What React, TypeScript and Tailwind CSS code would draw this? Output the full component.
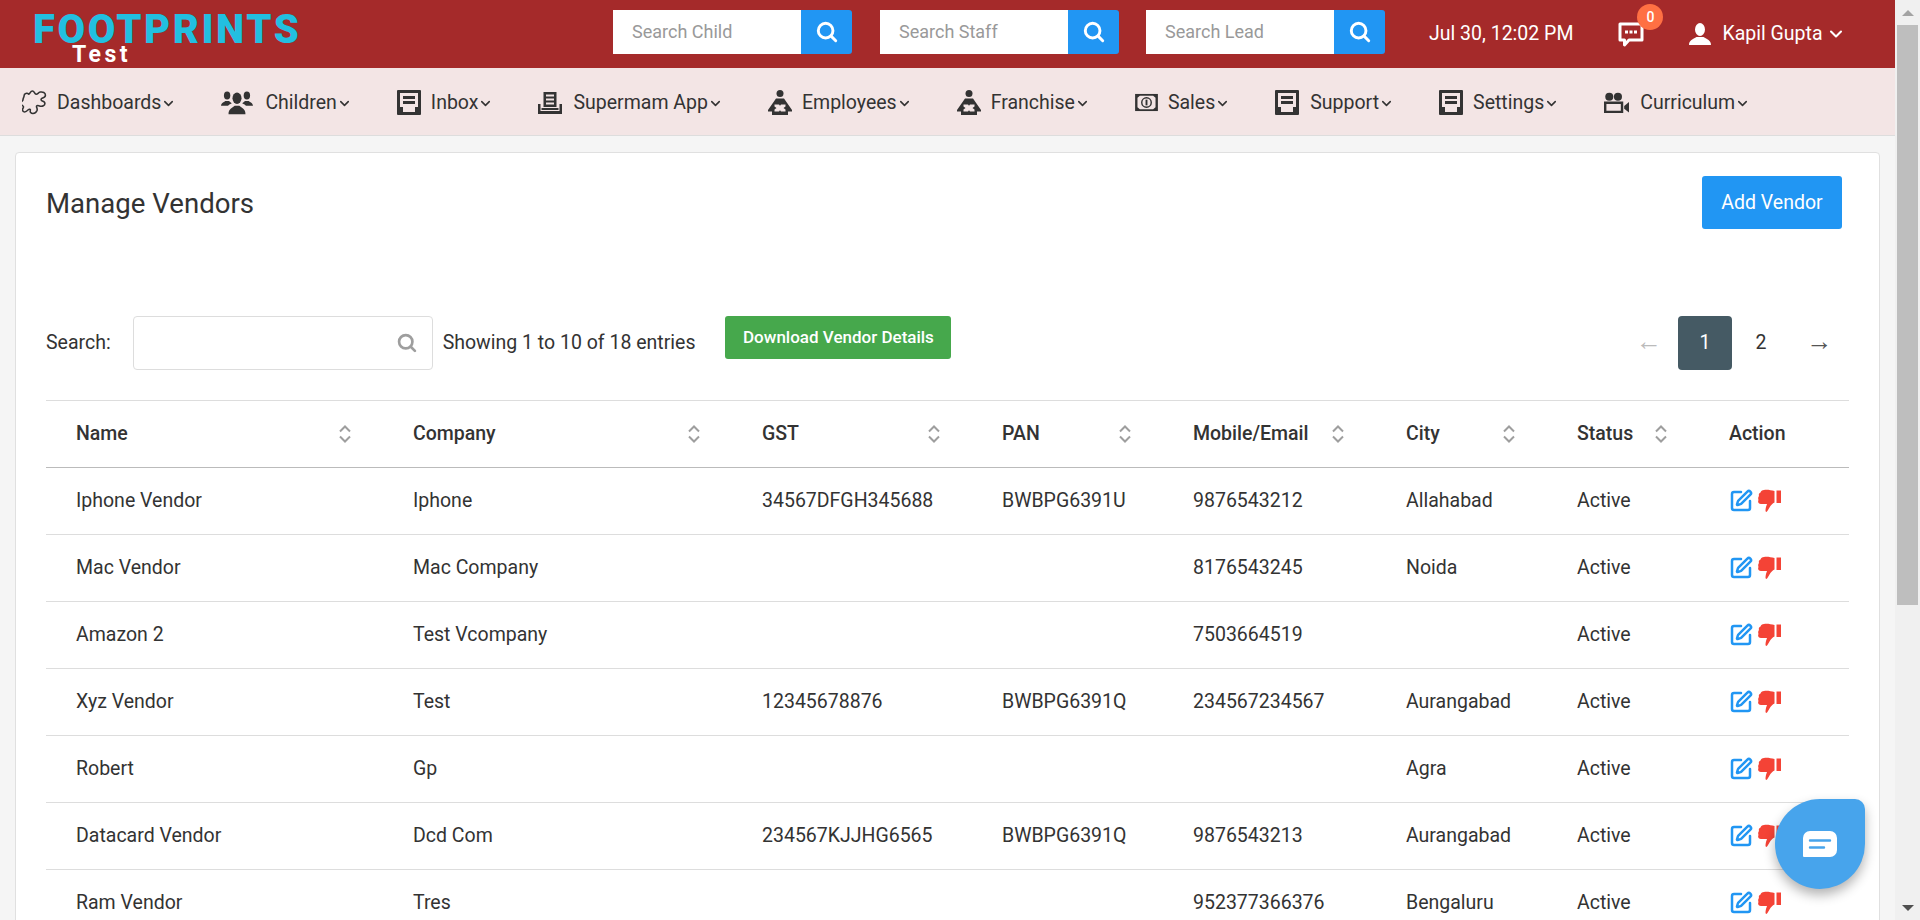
import React from 'react';
import { ChevronDown, SquarePen } from 'lucide-react';

interface Vendor {
  name: string;
  company: string;
  gst: string;
  pan: string;
  contact: string;
  city: string;
}

const vendors: Vendor[] = [
  { name: 'Iphone Vendor', company: 'Iphone', gst: '34567DFGH345688', pan: 'BWBPG6391U', contact: '9876543212', city: 'Allahabad' },
  { name: 'Mac Vendor', company: 'Mac Company', gst: '', pan: '', contact: '8176543245', city: 'Noida' },
  { name: 'Amazon 2', company: 'Test Vcompany', gst: '', pan: '', contact: '7503664519', city: '' },
  { name: 'Xyz Vendor', company: 'Test', gst: '12345678876', pan: 'BWBPG6391Q', contact: '234567234567', city: 'Aurangabad' },
  { name: 'Robert', company: 'Gp', gst: '', pan: '', contact: '', city: 'Agra' },
  { name: 'Datacard Vendor', company: 'Dcd Com', gst: '234567KJJHG6565', pan: 'BWBPG6391Q', contact: '9876543213', city: 'Aurangabad' },
  { name: 'Ram Vendor', company: 'Tres', gst: '', pan: '', contact: '952377366376', city: 'Bengaluru' },
];

const COLS = 'grid grid-cols-[337px_349px_240px_191px_213px_171px_152px_150px]';

// icons from the icon font of the original page, redrawn
const SearchIcon = ({ className }: { className: string }) => (
  <svg viewBox="0 0 24 24" className={className} fill="none" stroke="currentColor" strokeWidth="3.2" strokeLinecap="round">
    <circle cx="10.5" cy="10.5" r="8" />
    <path d="M16.5 16.5 21.5 21.5" />
  </svg>
);

const PuzzleIcon = () => (
  <svg viewBox="0 0 24 24" className="w-[25px] h-[25px] text-[#333]" fill="none" stroke="currentColor" strokeWidth="1.5" strokeLinejoin="round">
    <path d="M2 5.5C2 3 5 2.5 6.5 4 8 3.5 8 1 10 1c2 0 1.5 2.5 3.500 3 1.500.3 2-1.500 4-2 2.500-.5 5 .5 5 3 0 2-2 2.500-3.500 3-1 .5-1 2 .5 2.500 1.500.5 2.500 1 2.500 2.500 0 2-2.500 3-4.500 2.500-1.500-.5-3-1-3.500 0-.5 1 1 2 .5 4-.5 1.500-2 3-4 3-2 0-3-1.500-2.500-3 .3-1-1-1.500-2-.5-1 1-2.500 2.500-4 2-1.500-.5-2-2-1-3.500.7-1 .5-2-.5-2.500-1-.5-2-1.500-1.500-3 .5-1.500 2-1.500 2-3S2 7 2 5.500z" />
  </svg>
);

const PeopleIcon = () => (
  <svg viewBox="0 0 34 26" className="w-[32px] h-[25px] text-[#333]" fill="currentColor">
    <ellipse cx="6.5" cy="5.5" rx="3.4" ry="4.2" />
    <path d="M0 16.500c.3-3 3-3.600 4.500-5h4c1 1 2 1.600 3 2.200-2 1-3.500 1.800-4 2.800z" />
    <ellipse cx="27.5" cy="5.5" rx="3.4" ry="4.2" />
    <path d="M34 16.500c-.3-3-3-3.600-4.500-5h-4c-1 1-2 1.600-3 2.200 2 1 3.500 1.800 4 2.800z" />
    <ellipse cx="17" cy="8.5" rx="4.8" ry="6" />
    <path d="M8 25.500c0-6 4-6.500 6.500-9h5c2.500 2.500 6.500 3 6.500 9z" />
  </svg>
);

const TrayIcon = () => (
  <svg viewBox="0 0 24 25" className="w-[24px] h-[25px] text-[#333]">
    <path fill="currentColor" d="M1 0h22a1 1 0 0 1 1 1v23a1 1 0 0 1-1 1H1a1 1 0 0 1-1-1V1a1 1 0 0 1 1-1z" />
    <path fill="#f3e5e5" d="M3 3h18v14h-3v5H6v-5H3z" />
    <path fill="currentColor" d="M6 6h12v3H6zM6 11h12v3H6z" />
  </svg>
);

const StackIcon = () => (
  <svg viewBox="0 0 24 22" className="w-[24px] h-[22px] text-[#333]" fill="currentColor">
    <path d="M5.500 0h13v15h-13zM8 2.500v2h8v-2zM8 6.500v2h8v-2zM8 10.500v2h8v-2z" fillRule="evenodd" />
    <path d="M0 12h2.500v7h19v-7H24v10H0z" />
    <path d="M3.500 16h17v2h-17z" />
  </svg>
);

const ReaderIcon = () => (
  <svg viewBox="0 0 24 25" className="w-[24px] h-[25px] text-[#333]">
    <circle cx="12" cy="3.5" r="3.5" fill="currentColor" />
    <path fill="currentColor" d="M8 8.500h8l8 11.500v1.500h-4V25H4v-3.500H0V20z" />
    <path fill="#f3e5e5" d="M6.500 14.500h4.500l1 1.200 1-1.200h4.500v2l-2 1.500 2 1.500v2H13l-1-1.200-1 1.200H6.500v-2l2-1.500-2-1.500z" />
  </svg>
);

const MoneyIcon = () => (
  <svg viewBox="0 0 24 20" className="w-[23px] h-[19px] text-[#333]">
    <path fill="currentColor" d="M0 1h24v18H0z" />
    <path fill="#f3e5e5" d="M2.500 5 5 3h14l2.500 2v10L19 17H5l-2.500-2z" />
    <circle cx="12" cy="10" r="5" fill="none" stroke="currentColor" strokeWidth="1.5" />
    <path fill="currentColor" d="M11 7h2v6h-2z" />
  </svg>
);

const CameraIcon = () => (
  <svg viewBox="0 0 26 22" className="w-[25px] h-[22px] text-[#333]" fill="currentColor">
    <circle cx="5.5" cy="4.5" r="4.2" />
    <circle cx="14.5" cy="4.5" r="4.2" />
    <path d="M0 9.500h20v12H0zM2.500 12v7h15v-7z" fillRule="evenodd" />
    <path d="M21 14l5-4v11l-5-4z" />
  </svg>
);

const ChatIcon = () => (
  <svg viewBox="0 0 26 28" className="w-[26px] h-[28px] text-white">
    <path fill="none" stroke="currentColor" strokeWidth="3" strokeLinejoin="round" d="M2 2h22v16h-13l-4.500 5v-5H2z" />
    <path fill="currentColor" d="M7 8.500h3v3H7zM11.500 8.500h3v3h-3zM16 8.500h3v3h-3z" />
  </svg>
);

const UserIcon = () => (
  <svg viewBox="0 0 22 22" className="w-[22px] h-[22px] text-white" fill="currentColor">
    <ellipse cx="11" cy="6.5" rx="5" ry="6.5" />
    <path d="M0 22c0-5 4-5.500 7.500-8h7c3.500 2.500 7.500 3 7.500 8z" />
  </svg>
);

const ThumbDown = () => (
  <svg viewBox="0 0 23 24" className="w-[23px] h-[24px] text-[#f44336]" fill="currentColor">
    <path d="M6 1c4-.5 7 .5 10.500 1v11.500c-2 1-3.500 2.500-5 5-1 1.500-1.500 3-3 4.500-1.500 0-1-3-.5-5l1-3H3c-2.500 0-3.500-2-2.500-4C0 9.500 0 8 1 7c-.5-1.500 0-3 1.500-3.500C3 2 4 1 6 1z" />
    <path d="M18.500 1.500H23V14h-4.500z" />
  </svg>
);

const SortIcon = () => (
  <svg viewBox="0 0 12 18" className="w-[12px] h-[18px] text-[#9e9e9e]" fill="none" stroke="currentColor" strokeWidth="2">
    <path d="M1 6.500 6 1.500l5 5M1 11.500l5 5 5-5" />
  </svg>
);

const navItems: { label: string; icon: React.ReactNode; gap: string }[] = [
  { label: 'Dashboards', icon: <PuzzleIcon />, gap: 'gap-[10px]' },
  { label: 'Children', icon: <PeopleIcon />, gap: 'gap-[12px]' },
  { label: 'Inbox', icon: <TrayIcon />, gap: 'gap-[10px]' },
  { label: 'Supermam App', icon: <StackIcon />, gap: 'gap-[11px]' },
  { label: 'Employees', icon: <ReaderIcon />, gap: 'gap-[10px]' },
  { label: 'Franchise', icon: <ReaderIcon />, gap: 'gap-[10px]' },
  { label: 'Sales', icon: <MoneyIcon />, gap: 'gap-[10px]' },
  { label: 'Support', icon: <TrayIcon />, gap: 'gap-[11px]' },
  { label: 'Settings', icon: <TrayIcon />, gap: 'gap-[10px]' },
  { label: 'Curriculum', icon: <CameraIcon />, gap: 'gap-[11px]' },
];

const HeaderSearch = ({ placeholder }: { placeholder: string }) => (
  <div className="flex w-[239px] h-[44px] mb-[4px]">
    <input
      placeholder={placeholder}
      className="w-[188px] h-full bg-white pl-[19px] pb-[2px] text-[18px] outline-none placeholder:text-[#999]"
    />
    <button className="w-[51px] h-full bg-[#2196f3] rounded-r-[3px] flex items-center justify-center text-white">
      <SearchIcon className="w-[22px] h-[22px]" />
    </button>
  </div>
);

export default function App() {
  return (
    <div className="flex h-[920px] overflow-hidden bg-[#f5f5f5] text-[#333] font-['Roboto',sans-serif]">
      <div className="w-[1895px] shrink-0 flex flex-col relative">
        {/* TOP BAR */}
        <header className="h-[68px] shrink-0 bg-[#a52a2a] flex items-center">
          <div className="w-[613px] pl-[33px] shrink-0 flex flex-col h-full pt-[13px]">
            <span className="font-black text-[40px] leading-[33px] tracking-[2.6px] text-[#22bfe0]">FOOTPRINTS</span>
            <span className="ml-[39px] font-bold text-[23px] leading-[18px] tracking-[3.4px] text-white">Test</span>
          </div>
          <HeaderSearch placeholder="Search Child" />
          <div className="w-[28px]" />
          <HeaderSearch placeholder="Search Staff" />
          <div className="w-[27px]" />
          <HeaderSearch placeholder="Search Lead" />
          <span className="ml-[44px] text-[19.5px] text-white">Jul 30, 12:02 PM</span>
          <div className="ml-[45px] relative flex pt-[4px]">
            <ChatIcon />
            <span className="absolute -top-[14px] left-[19px] w-[26px] h-[26px] rounded-full bg-[#ff7043] text-white text-[14px] font-medium flex items-center justify-center">0</span>
          </div>
          <div className="ml-[45px] flex items-center text-white">
            <UserIcon />
            <span className="ml-[11px] text-[19.5px]">Kapil Gupta</span>
            <ChevronDown className="ml-[3px] w-[20px] h-[20px]" strokeWidth={2.5} />
          </div>
        </header>

        {/* MENU */}
        <nav className="h-[68px] shrink-0 bg-[#f3e5e5] border-b border-[#dddddd] flex items-center pl-[22px] pt-[2px] gap-[45px] text-[19.5px] text-[#333]">
          {navItems.map(item => (
            <div key={item.label} className={`flex items-center ${item.gap}`}>
              {item.icon}
              <span className="flex items-center">
                {item.label}
                <ChevronDown className="w-[15px] h-[15px] mt-[2px]" strokeWidth={2.5} />
              </span>
            </div>
          ))}
        </nav>

        {/* CARD */}
        <main className="flex-1 min-h-0 pl-[15px] pr-[15px] pt-[16px]">
          <div className="bg-white border border-[#e0e0e0] rounded-[4px] h-[1200px] pl-[30px] pr-[30px] pt-[23px]">
            <div className="flex items-center justify-between pr-[7px]">
              <h1 className="text-[27.6px] leading-[55px] h-[53px] text-[#333]">Manage Vendors</h1>
              <button className="w-[140px] h-[53px] bg-[#2196f3] rounded-[3px] text-white text-[19.5px]">Add Vendor</button>
            </div>

            <div className="flex items-start mt-[87px] h-[84px]">
              <span className="text-[19.5px] leading-[54px]">Search:</span>
              <div className="ml-[22px] w-[300px] h-[54px] border border-[#dddddd] rounded-[4px] flex items-center justify-end pr-[15px] text-[#9e9e9e]">
                <SearchIcon className="w-[20px] h-[20px]" />
              </div>
              <span className="ml-[10px] text-[19.5px] leading-[54px]">Showing 1 to 10 of 18 entries</span>
              <button className="ml-[30px] w-[226px] h-[43px] bg-[#46a84c] rounded-[3px] text-white text-[17px] font-medium">Download Vendor Details</button>
              <div className="ml-auto flex items-center h-[54px]">
                <span className="w-[54px] text-center text-[26px] leading-none -mt-[4px] text-[#bbbbbb]">←</span>
                <span className="ml-[2px] w-[54px] h-[54px] rounded-[4px] bg-[#455a64] text-white text-[19.5px] flex items-center justify-center">1</span>
                <span className="w-[58px] text-center text-[19.5px]">2</span>
                <span className="w-[59px] text-center text-[26px] leading-none -mt-[4px] text-[#555]">→</span>
              </div>
            </div>

            <div className={`${COLS} h-[68px] items-center border-t border-b border-[#dddddd] border-b-[#bbbbbb] text-[19.5px] font-medium`}>
              {['Name', 'Company', 'GST', 'PAN', 'Mobile/Email', 'City', 'Status'].map(title => (
                <div key={title} className="flex items-center justify-between pl-[30px] pr-[32px]">
                  <span>{title}</span>
                  <SortIcon />
                </div>
              ))}
              <div className="pl-[30px]">Action</div>
            </div>

            {vendors.map(v => (
              <div key={v.name} className={`${COLS} h-[67px] items-center border-b border-[#dddddd] text-[19.5px]`}>
                <div className="pl-[30px]">{v.name}</div>
                <div className="pl-[30px]">{v.company}</div>
                <div className="pl-[30px]">{v.gst}</div>
                <div className="pl-[30px]">{v.pan}</div>
                <div className="pl-[30px]">{v.contact}</div>
                <div className="pl-[30px]">{v.city}</div>
                <div className="pl-[30px]">Active</div>
                <div className="pl-[30px] flex items-center gap-[5px]">
                  <SquarePen className="w-[24px] h-[24px] text-[#2196f3]" strokeWidth={2.5} />
                  <ThumbDown />
                </div>
              </div>
            ))}
          </div>
        </main>

        {/* CHAT WIDGET */}
        <div className="absolute left-[1775px] top-[799px] w-[90px] h-[90px] rounded-[50%_10px_50%_50%] bg-[#47a4ec] shadow-[0_6px_12px_rgba(0,0,0,0.3)] flex items-center justify-center">
          <svg viewBox="0 0 34 26" className="w-[34px] h-[26px]">
            <path fill="#ffffff" d="M1 0h26a7 7 0 0 1 7 7v12a7 7 0 0 1-7 7H1a1 1 0 0 1-1-1V7a7 7 0 0 1 7-7z" />
            <path fill="none" stroke="#47a4ec" strokeWidth="2.4" strokeLinecap="round" d="M7 9.500h20M7 16.500h14" />
          </svg>
        </div>
      </div>

      {/* SCROLLBAR */}
      <div className="w-[25px] shrink-0 bg-[#f0f0f0] flex flex-col items-center">
        <div className="h-[25px] w-full flex items-center justify-center">
          <div className="w-0 h-0 border-x-[6px] border-x-transparent border-b-[6px] border-b-[#a3a3a3]" />
        </div>
        <div className="w-[21px] h-[580px] bg-[#bebebe]" />
        <div className="mt-auto h-[25px] w-full flex items-center justify-center">
          <div className="w-0 h-0 border-x-[6px] border-x-transparent border-t-[6px] border-t-[#505050]" />
        </div>
      </div>
    </div>
  );
}
